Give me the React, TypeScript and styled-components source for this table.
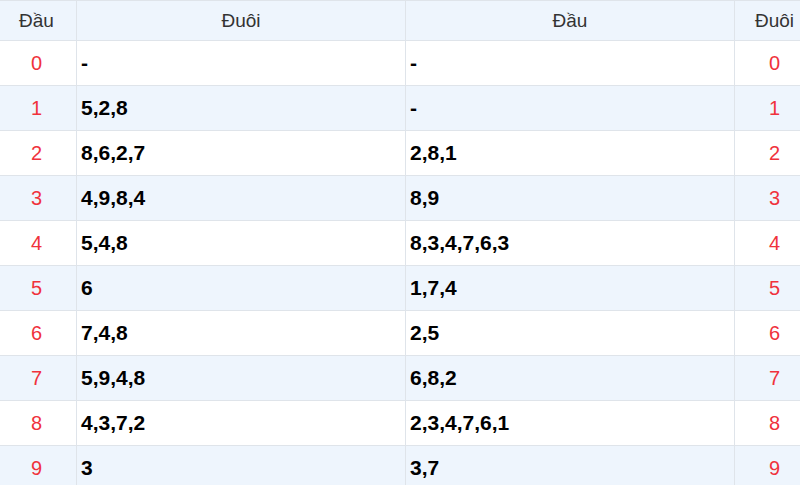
import React from "react";
import styled, { createGlobalStyle } from "styled-components";

const Global = createGlobalStyle`
  html, body { margin: 0; padding: 0; background: #fff; overflow: hidden; }
  body { font-family: "Liberation Sans", Arial, sans-serif; }
`;

const Wrap = styled.div`
  margin-left: -4px;
  width: 818px;
`;

const Table = styled.table`
  border-collapse: collapse;
  width: 818px;
  table-layout: fixed;
`;

const Th = styled.th<{ $w: number }>`
  width: ${(p) => p.$w}px;
  height: 39px;
  padding: 0;
  border: 1px solid #dfe4ea;
  background: #eef5fd;
  color: #333;
  font-weight: normal;
  font-size: 19px;
  text-align: center;
  vertical-align: middle;
`;

const Row = styled.tr<{ $alt: boolean }>`
  background: ${(p) => (p.$alt ? "#eef5fd" : "#ffffff")};
`;

const NumCell = styled.td`
  height: 44px;
  padding: 0;
  border: 1px solid #dfe4ea;
  color: #f0323c;
  font-size: 20px;
  text-align: center;
  vertical-align: middle;
`;

const ValCell = styled.td`
  height: 44px;
  padding: 0 4px;
  border: 1px solid #dfe4ea;
  color: #000;
  font-weight: bold;
  font-size: 21px;
  text-align: left;
  vertical-align: middle;
`;

const rows: [string, string][] = [
  ["-", "-"],
  ["5,2,8", "-"],
  ["8,6,2,7", "2,8,1"],
  ["4,9,8,4", "8,9"],
  ["5,4,8", "8,3,4,7,6,3"],
  ["6", "1,7,4"],
  ["7,4,8", "2,5"],
  ["5,9,4,8", "6,8,2"],
  ["4,3,7,2", "2,3,4,7,6,1"],
  ["3", "3,7"],
];

export default function App() {
  return (
    <>
      <Global />
      <Wrap>
        <Table>
          <thead>
            <tr>
              <Th $w={79}>Đầu</Th>
              <Th $w={328}>Đuôi</Th>
              <Th $w={328}>Đầu</Th>
              <Th $w={79}>Đuôi</Th>
            </tr>
          </thead>
          <tbody>
            {rows.map(([a, b], i) => (
              <Row key={i} $alt={i % 2 === 1}>
                <NumCell>{i}</NumCell>
                <ValCell>{a}</ValCell>
                <ValCell>{b}</ValCell>
                <NumCell>{i}</NumCell>
              </Row>
            ))}
          </tbody>
        </Table>
      </Wrap>
    </>
  );
}
